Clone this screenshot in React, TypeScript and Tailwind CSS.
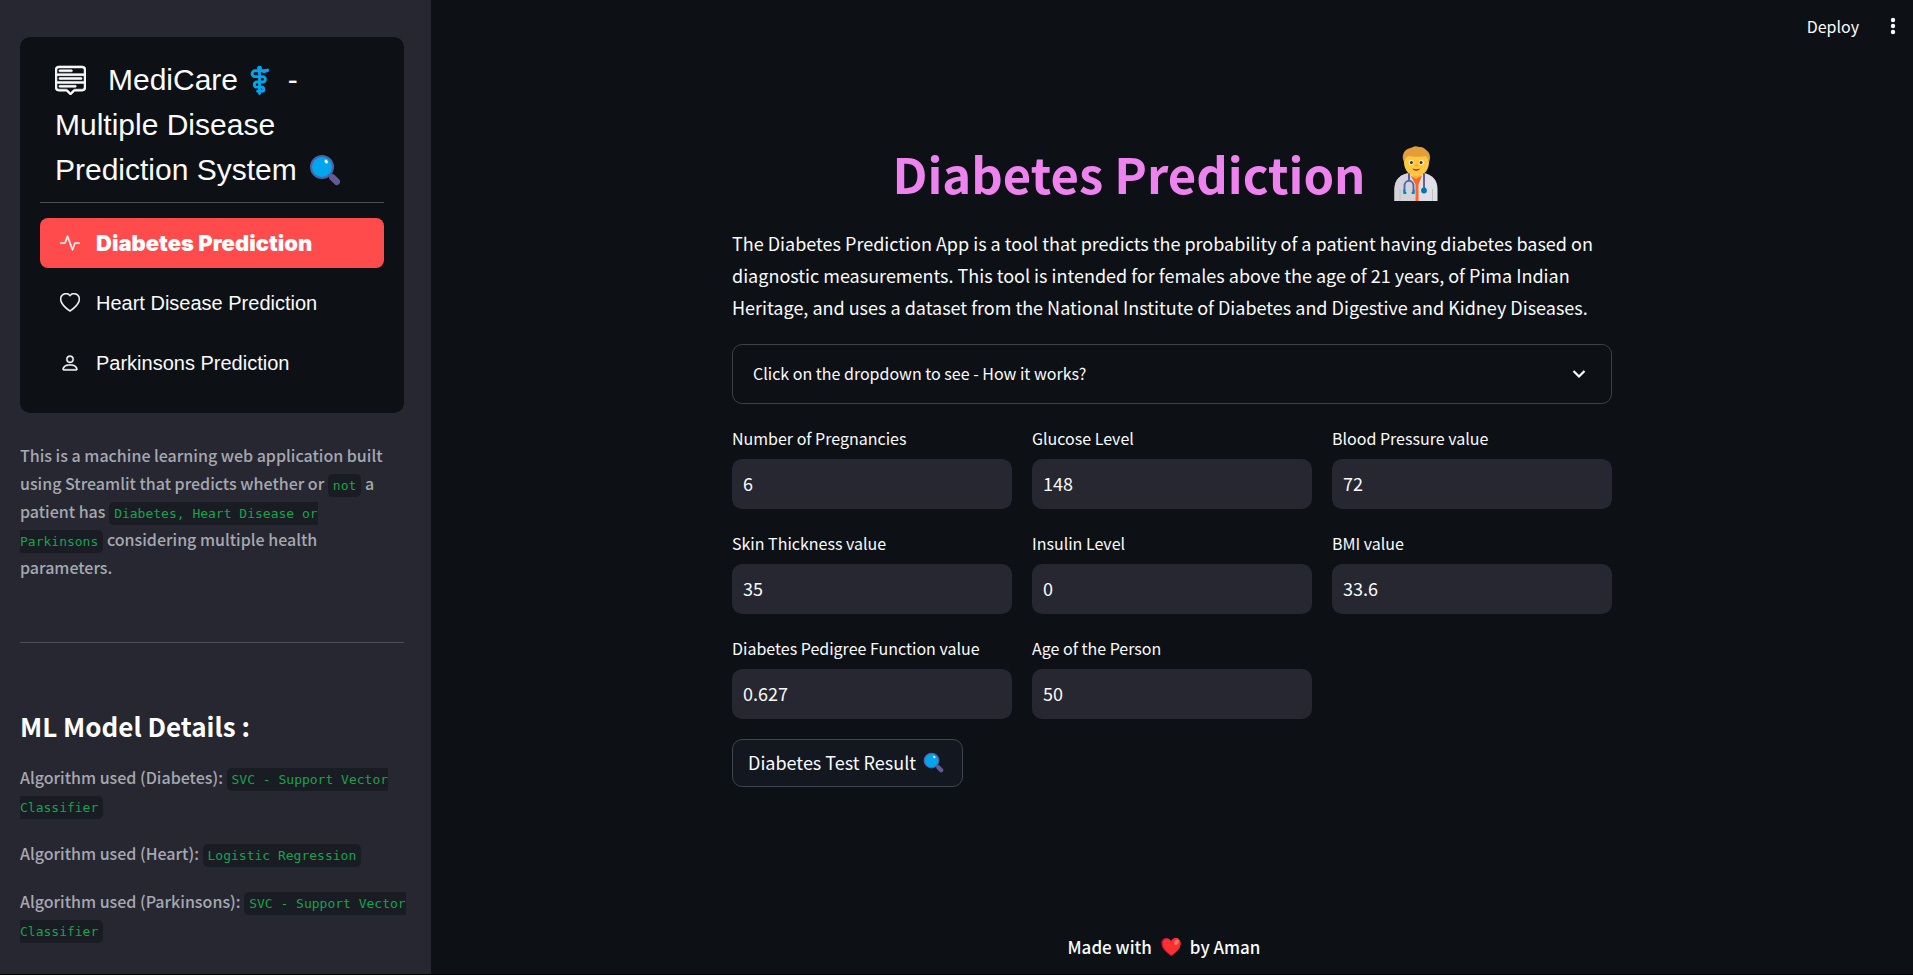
import type { ReactNode } from "react";
import { BsActivity, BsHeart, BsMenuUp, BsPerson } from "react-icons/bs";

function Magnifier({ className }: { className: string }) {
  return (
    <svg viewBox="0 0 32 32" className={className} aria-hidden="true">
      <path d="M20 20l3.5 3.5" stroke="#44568f" strokeWidth="3" />
      <path d="M23.4 23.4l4.3 4.3" stroke="#635994" strokeWidth="6.6" strokeLinecap="round" />
      <circle cx="13" cy="13" r="11" fill="#00a6ed" stroke="#4d62a3" strokeWidth="2" />
      <ellipse cx="17.2" cy="7.6" rx="1.6" ry="2.1" fill="#e8f8ff" transform="rotate(-35 17.2 7.6)" />
    </svg>
  );
}

function MedicalStaff({ className }: { className: string }) {
  return (
    <svg viewBox="0 0 20 32" className={className} fill="none" stroke="#00a6ed" strokeLinecap="round" aria-hidden="true">
      <circle cx="10" cy="3.4" r="2.6" fill="#00a6ed" stroke="none" />
      <path d="M10 3v27.5" strokeWidth="3" />
      <path
        d="M17.5 6.2H5.2a3.1 3.1 0 0 0 0 6.2h8.2a2.9 2.9 0 0 1 0 5.8H7.2a2.7 2.7 0 0 0 0 5.4h5.2a2.2 2.2 0 0 1 0 4.4H8"
        strokeWidth="3.1"
      />
      <path d="M14.5 6.8l4-1.2" strokeWidth="3.4" />
    </svg>
  );
}

function HeartEmoji({ className }: { className: string }) {
  return (
    <svg viewBox="0 0 32 32" className={className} aria-hidden="true">
      <path
        d="M16 29C8 23 2 18 2 10.500C2 6 5.200 3 9.200 3C12.200 3 14.700 4.600 16 7.300C17.300 4.600 19.800 3 22.800 3C26.800 3 30 6 30 10.500C30 18 24 23 16 29Z"
        fill="#ca0b4a"
      />
      <path
        d="M17 28.200C9.500 22.500 4 17.500 4 10.800C4 7 6.500 4.300 10 4C13 4 15 5.600 16.200 8.200C17.500 5 20 3 22.800 3C26.800 3 30 6 30 10.500C30 18 24.500 22.700 17 28.200Z"
        fill="#f8312f"
      />
      <ellipse cx="24" cy="9" rx="3" ry="4.200" fill="#f37366" transform="rotate(30 24 9)" />
    </svg>
  );
}

function Doctor({ className }: { className: string }) {
  return (
    <svg viewBox="0 0 44 56" className={className} aria-hidden="true">
      <path d="M0.500 56V44C0.500 34 7 29 16 28h13c9 1 14.500 7 14.500 16v12Z" fill="#e1dfe6" />
      <path d="M0.500 56V44C0.500 34 7 29 16 28l6 28Z" fill="#d3d3d8" />
      <path d="M6 56V44M38.500 56V44" stroke="#c0bfc8" strokeWidth="1" />
      <path d="M16 28l6.500 8 6.500-8-1-5H17Z" fill="#ffb02e" />
      <path d="M16.500 30.500L22 34l6-3.500-3.500 9V56h-3V39.500Z" fill="#ff6723" />
      <path d="M10 17c0-9 5-12 12-12s13 3 13 12c0 8-5 14-12.500 14S10 25 10 17Z" fill="#ffc83d" />
      <path
        d="M10 17C8 12.500 8.500 8 12 5c2-2 5-1.500 7-3 2-1.300 4-.5 6 0 3-.5 6 1 7 3 4 2 5 8 3 12-1-2.500-1.500-4.500-3-6-3.500 1-13.500 1-18 0-2 1.500-3.500 3-4 6Z"
        fill="#e39d3a"
      />
      <circle cx="17" cy="17.500" r="2.300" fill="#fff" />
      <circle cx="27.500" cy="17.500" r="2.300" fill="#fff" />
      <circle cx="17.400" cy="17.500" r="1.500" fill="#402a32" />
      <circle cx="27.100" cy="17.500" r="1.500" fill="#402a32" />
      <path d="M21.500 19.500h2l.4 1.800h-3Z" fill="#f59f1e" />
      <path d="M18.500 23.500c2.500 1 5 1 7.500 0-1 3-6.500 3-7.500 0Z" fill="#bb1d52" />
      <g fill="none" strokeLinecap="round" strokeWidth="1.900">
        <path d="M15 29v6M30 29v15" stroke="#635994" />
        <path d="M10.500 47v-6c0-7 9-7 9 0v6" stroke="#4d6cb3" />
      </g>
      <path d="M10.300 44.500v3.500h2M19.700 44.500v3.500h-2" stroke="#0084ce" strokeWidth="2" fill="none" />
      <circle cx="30" cy="45.500" r="2.900" fill="#0074ba" />
    </svg>
  );
}

function Code({ children }: { children: ReactNode }) {
  return (
    <code className="rounded-[5px] bg-[#1a1c24] px-[5px] py-1 font-['DejaVu_Sans_Mono',monospace] text-[13px] leading-none font-normal text-[#16a34a]">
      {children}
    </code>
  );
}

const navItems = [
  { label: "Diabetes Prediction", Icon: BsActivity, active: true },
  { label: "Heart Disease Prediction", Icon: BsHeart, active: false },
  { label: "Parkinsons Prediction", Icon: BsPerson, active: false },
];

const fields = [
  { id: "pregnancies", label: "Number of Pregnancies", value: "6" },
  { id: "glucose", label: "Glucose Level", value: "148" },
  { id: "pressure", label: "Blood Pressure value", value: "72" },
  { id: "skin", label: "Skin Thickness value", value: "35" },
  { id: "insulin", label: "Insulin Level", value: "0" },
  { id: "bmi", label: "BMI value", value: "33.6" },
  { id: "pedigree", label: "Diabetes Pedigree Function value", value: "0.627" },
  { id: "age", label: "Age of the Person", value: "50" },
];

const models = [
  { name: "Diabetes", algorithm: "SVC - Support Vector Classifier" },
  { name: "Heart", algorithm: "Logistic Regression" },
  { name: "Parkinsons", algorithm: "SVC - Support Vector Classifier" },
];

function Sidebar() {
  return (
    <aside className="w-[431px] shrink-0 bg-[#262730] pt-[37px] pr-[27px] pb-7 pl-5">
      <div className="rounded-[10px] bg-[#0d1116] p-5 pb-[25px] font-['Liberation_Sans',Arial,sans-serif] text-[#fafafa]">
        <div className="border-b border-[#4a4d52] px-[15px] pb-[10px]">
          <h2 className="text-[30px] leading-[45px]">
            <BsMenuUp className="mr-[22px] inline size-[31px] stroke-current align-[-5px] [stroke-width:0.3px]" />
            MediCare <MedicalStaff className="mr-[10px] ml-1 inline h-[30px] w-[19px] align-[-5px]" /> - Multiple Disease Prediction
            System <Magnifier className="ml-1 inline size-8 align-[-6px]" />
          </h2>
        </div>
        <nav className="mt-[15px] flex flex-col gap-[10px]">
          {navItems.map(({ label, Icon, active }) => (
            <a
              key={label}
              href="#"
              className={
                active
                  ? "flex h-[50px] items-center gap-4 rounded-[8px] bg-[#ff4b4b] px-5 font-['Inter',sans-serif] text-[22px] font-black text-white"
                  : "flex h-[50px] items-center gap-4 rounded-[8px] px-5 text-xl text-[#fafafa]"
              }
            >
              <Icon className="size-5 shrink-0 stroke-current [stroke-width:0.3px]" />
              {label}
            </a>
          ))}
        </nav>
      </div>

      <p className="mt-7 text-base leading-7 font-medium text-[#a6a8b1]">
        This is a machine learning web application built using Streamlit that predicts whether or <Code>not</Code> a patient has{" "}
        <Code>Diabetes, Heart Disease or Parkinsons</Code> considering multiple health parameters.
      </p>

      <hr className="mt-[61px] border-[#4c4d55]" />

      <h3 className="mt-[65px] text-[26px] leading-9 font-semibold text-white">ML Model Details :</h3>
      <div className="-mr-4 mt-[19px] flex flex-col gap-5">
        {models.map(({ name, algorithm }) => (
          <p key={name} className="text-base leading-7 font-medium text-[#a6a8b1]">
            Algorithm used ({name}): <Code>{algorithm}</Code>
          </p>
        ))}
      </div>
    </aside>
  );
}

export default function App() {
  return (
    <div className="flex min-h-screen border-b border-black bg-[#0d1116] font-['Noto_Sans_CJK_SC','Source_Sans_Pro',sans-serif] text-[#fafafa]">
      <Sidebar />
      <div className="flex min-w-0 flex-1 flex-col">
        <header className="flex h-[54px] items-center justify-end gap-[30px] pr-4 pb-[2px]">
          <button type="button" className="text-base">
            Deploy
          </button>
          <button type="button" aria-label="Main menu">
            <svg viewBox="0 0 8 20" className="h-5 w-2" fill="#fafafa">
              <circle cx="4" cy="4" r="2.200" />
              <circle cx="4" cy="10" r="2.200" />
              <circle cx="4" cy="16" r="2.200" />
            </svg>
          </button>
        </header>

        <main className="mx-auto w-full max-w-[880px] pt-[83px]">
          <h1 className="flex items-center justify-center text-[49px] leading-[72px] font-bold text-[#ee82ee]">
            Diabetes Prediction
            <Doctor className="mr-[14px] ml-7 h-14 w-11" />
          </h1>
          <p className="mt-[18px] text-lg leading-8">
            The Diabetes Prediction App is a tool that predicts the probability of a patient having diabetes based on diagnostic
            measurements. This tool is intended for females above the age of 21 years, of Pima Indian Heritage, and uses a dataset from
            the National Institute of Diabetes and Digestive and Kidney Diseases.
          </p>

          <button
            type="button"
            aria-expanded="false"
            className="mt-[21px] flex h-[60px] w-full items-center justify-between rounded-[10px] border border-[#3d4045] px-5 pb-[2px] text-left text-base"
          >
            Click on the dropdown to see - How it works?
            <svg viewBox="0 0 24 24" className="size-6" fill="none" stroke="#fafafa" strokeWidth="2.200" aria-hidden="true">
              <path d="M6.500 10l5.500 5.500L17.500 10" />
            </svg>
          </button>

          <form className="mt-5">
            <div className="grid grid-cols-3 gap-5">
              {fields.map(({ id, label, value }) => (
                <div key={id}>
                  <label htmlFor={id} className="mb-[7px] block text-base leading-7">
                    {label}
                  </label>
                  <input
                    id={id}
                    type="text"
                    defaultValue={value}
                    className="block h-[50px] w-full rounded-[10px] bg-[#262730] px-[11px] pb-[2px] text-lg text-[#fafafa] outline-none"
                  />
                </div>
              ))}
            </div>
            <button
              type="button"
              className="mt-5 flex h-12 items-center gap-[7px] rounded-[10px] border border-[#41444c] bg-[#131720] px-[15px] pb-[2px] text-lg"
            >
              Diabetes Test Result
              <Magnifier className="mr-[3px] size-[21px]" />
            </button>
          </form>
        </main>

        <footer className="mt-36 flex items-center justify-center gap-2 pr-4 pb-[11px] text-[17px] leading-8 font-medium">
          Made with
          <HeartEmoji className="size-[22px]" />
          by Aman
        </footer>
      </div>
    </div>
  );
}
